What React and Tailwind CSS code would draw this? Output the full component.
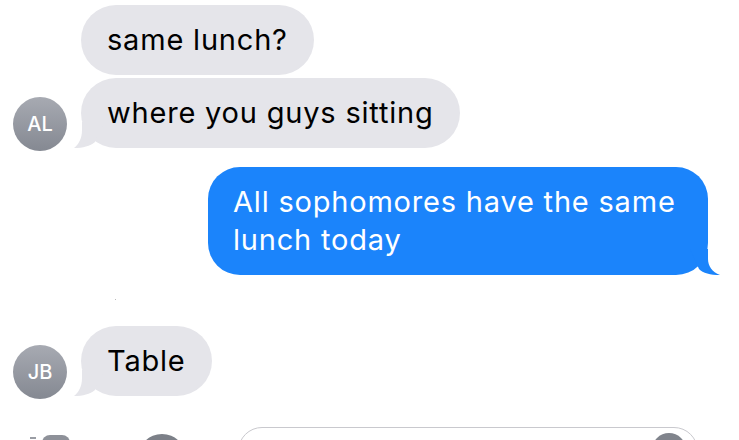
import React from "react";

const font = { fontFamily: "Inter, 'Noto Sans', 'Liberation Sans', sans-serif" };

function GrayTail() {
  return (
    <svg className="absolute left-[-7px] bottom-0" width="30" height="26" viewBox="0 0 30 26">
      <path d="M8 0 L8 8 C8 16 5 22 0 26 C9 26 16 24 21 20 L30 0 Z" fill="#e5e5ea" />
    </svg>
  );
}

function BlueTail() {
  return (
    <svg className="absolute right-[-12px] bottom-0" width="30" height="26" viewBox="0 0 30 26">
      <path d="M18 0 L18 10 C18 17 22 23 30 26 C20 26 13 24 9 20 L0 0 Z" fill="#1b84fb" />
    </svg>
  );
}

function Avatar({ initials }) {
  return (
    <div className="w-[54px] h-[54px] rounded-full bg-gradient-to-b from-[#a7aab2] to-[#858992] flex items-center justify-center text-white text-[20px] font-medium shrink-0 relative top-[3px]">
      {initials}
    </div>
  );
}

const bubbleText = "text-[29px] leading-[38px] tracking-[0.8px]";

export default function App() {
  return (
    <div className="w-[739px] h-[440px] overflow-hidden bg-white flex flex-col relative" style={font}>
      <div className="pt-[5px] pl-[81px] flex shrink-0">
        <div className={"bg-[#e5e5ea] rounded-full px-[26px] py-[16px] text-black " + bubbleText}>
          same lunch?
        </div>
      </div>
      <div className="mt-[3px] pl-[13px] flex items-end gap-[14px] shrink-0">
        <Avatar initials="AL" />
        <div className={"relative bg-[#e5e5ea] rounded-full px-[26px] py-[16px] text-black " + bubbleText}>
          <GrayTail />
          <span className="relative">where you guys sitting</span>
        </div>
      </div>
      <div className="mt-[19px] flex justify-end pr-[31px] shrink-0">
        <div className={"relative w-[500px] bg-[#1b84fb] rounded-[32px] px-[25px] py-[16px] text-white " + bubbleText}>
          <BlueTail />
          <span className="relative">All sophomores have the same<br />lunch today</span>
        </div>
      </div>
      <div className="h-[51px] relative shrink-0">
        <div className="absolute left-[115px] top-[24px] w-[1px] h-[1px] bg-[#bbb]" />
      </div>
      <div className="pl-[13px] flex items-end gap-[14px] shrink-0">
        <Avatar initials="JB" />
        <div className={"relative bg-[#e5e5ea] rounded-full px-[26px] py-[16px] text-black " + bubbleText}>
          <GrayTail />
          <span className="relative">Table</span>
        </div>
      </div>
      <div className="mt-[31px] flex items-start h-[40px] shrink-0">
        <div className="ml-[30px] mt-[8px] w-[40px] h-[28px] flex">
          <div className="w-[6px] h-[2px] bg-[#9a9da4] mt-[2px]" />
          <div className="ml-[6px] w-[28px] h-[28px] rounded-[8px] bg-[#8e9199]" />
        </div>
        <div className="ml-[68px] mt-[7px] w-[48px] h-[48px] rounded-full bg-[#7c8088] shrink-0" />
        <div className="ml-[52px] w-[460px] h-[48px] rounded-[24px] border-[1.5px] border-[#c9c9ce] relative flex justify-end">
          <div className="mt-[5px] mr-[11px] w-[34px] h-[34px] rounded-full bg-[#80848c]" />
        </div>
      </div>
    </div>
  );
}
